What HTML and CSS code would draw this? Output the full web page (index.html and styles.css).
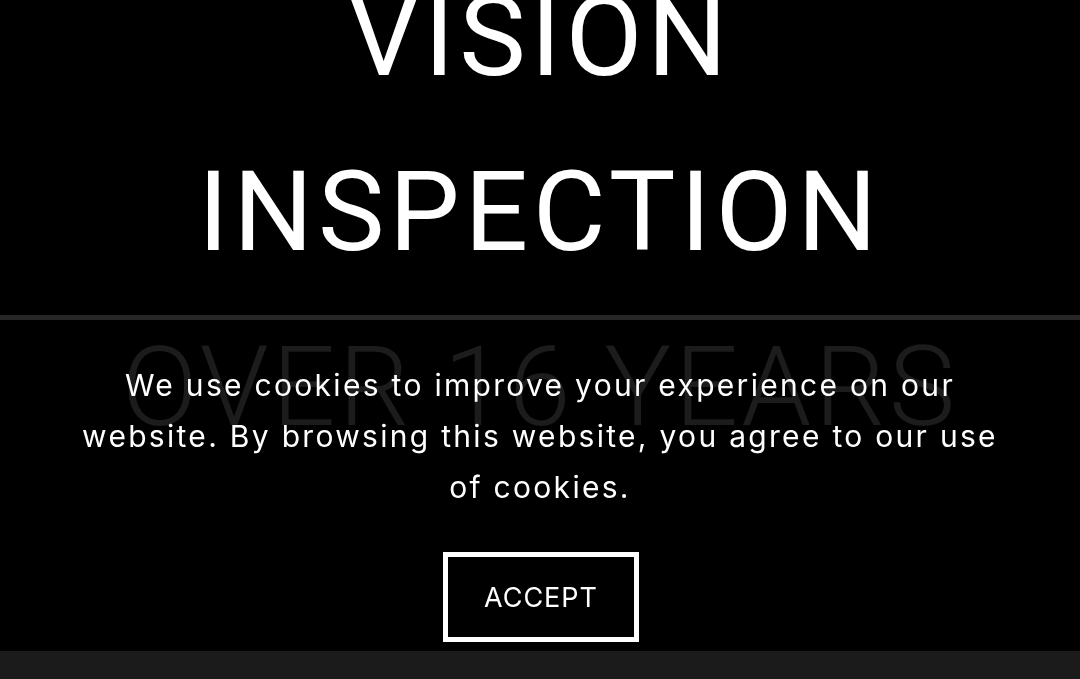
FILE: index.html
```html
<!DOCTYPE html>
<html lang="en">
<head>
<meta charset="utf-8">
<title>Vision Inspection</title>
<link rel="stylesheet" href="styles.css">
</head>
<body>
<main class="page">
  <section class="hero">
    <h1 class="hero-title">VISION<br>INSPECTION</h1>
  </section>
  <hr class="divider">
  <section class="stats">
    <h2 class="stats-title">OVER 16 YEARS</h2>
  </section>
  <section class="next"></section>
</main>
<div class="cookie-banner">
  <p class="cookie-text">We use cookies to improve your experience on our website. By browsing this website, you agree to our use of cookies.</p>
  <button class="cookie-accept" type="button">ACCEPT</button>
</div>
</body>
</html>
```
FILE: styles.css
```css
html, body {
  margin: 0;
  padding: 0;
  background: #000;
  height: 100%;
  overflow: hidden;
}

.page {
  display: flex;
  flex-direction: column;
}

.hero {
  margin-top: -51px;
  text-align: center;
}

.hero-title {
  margin: 0;
  font-family: Roboto, "Liberation Sans", sans-serif;
  font-weight: 400;
  font-size: 112px;
  line-height: 175px;
  letter-spacing: 0.042em;
  color: #fff;
}

.divider {
  margin: 16px 0 0;
  border: 0;
  height: 5px;
  background: #262626;
}

.stats {
  padding: 11px 0 208px;
  text-align: center;
}

.stats-title {
  margin: 0;
  font-family: Roboto, "Liberation Sans", sans-serif;
  font-weight: 300;
  font-size: 112px;
  line-height: 112px;
  letter-spacing: 0.028em;
  color: #1c1c1c;
}

.next {
  height: 200px;
  background: #1b1b1b;
}

.cookie-banner {
  position: fixed;
  left: 0;
  right: 0;
  bottom: 37px;
  display: flex;
  flex-direction: column;
  align-items: center;
  gap: 39px;
}

.cookie-text {
  margin: 0;
  max-width: 935px;
  font-family: Inter, "Noto Sans", sans-serif;
  font-size: 30px;
  line-height: 51px;
  letter-spacing: 2.3px;
  text-align: center;
  color: #fff;
}

.cookie-accept {
  box-sizing: border-box;
  width: 196px;
  height: 90px;
  margin-left: 2px;
  border: 5px solid #fff;
  background: #000;
  color: #fff;
  font-family: Inter, "Noto Sans", sans-serif;
  font-size: 27px;
  letter-spacing: 1px;
  padding: 0;
}
```
